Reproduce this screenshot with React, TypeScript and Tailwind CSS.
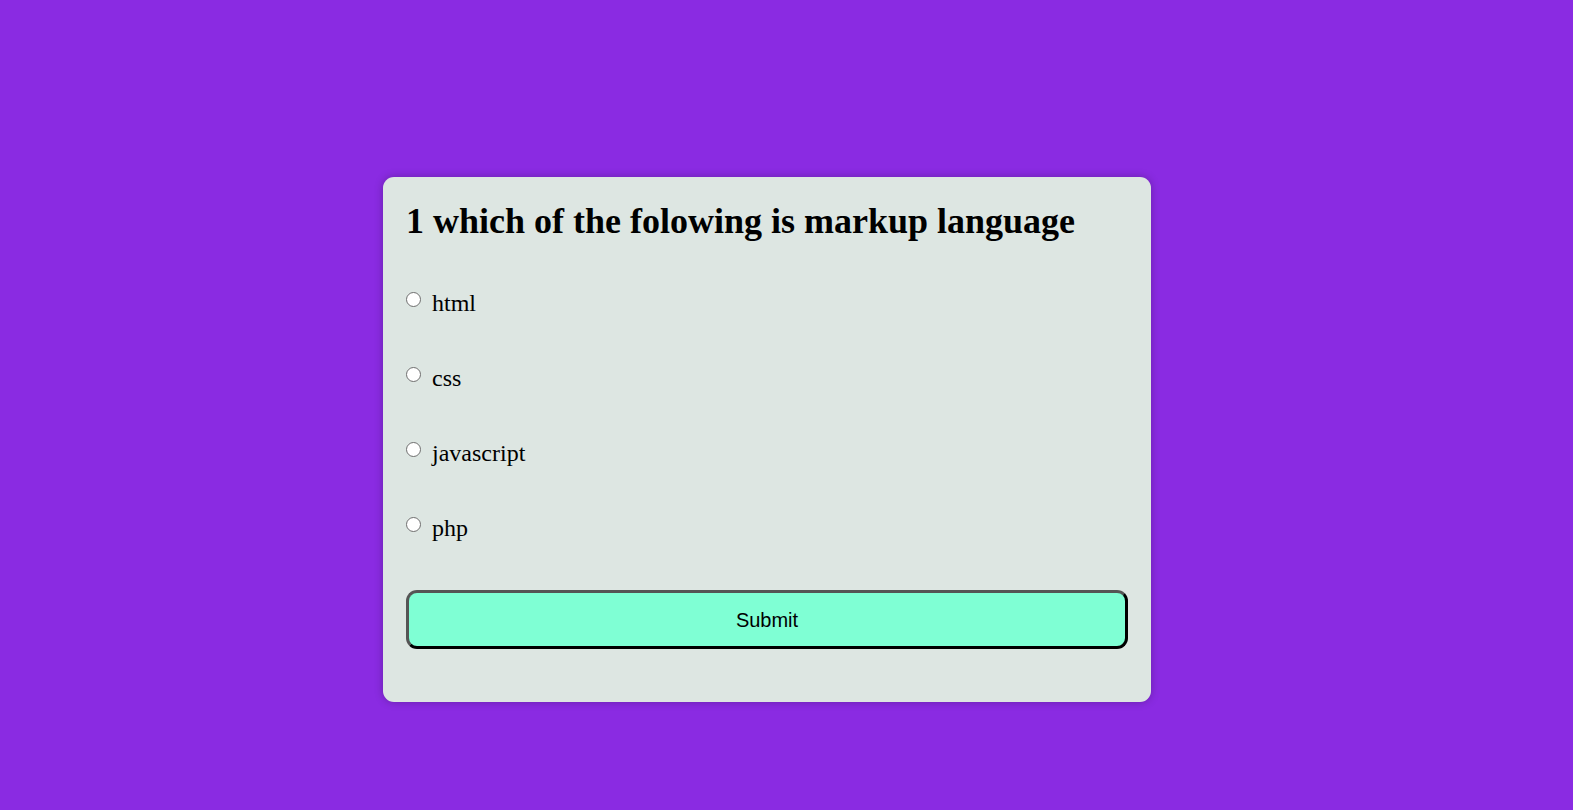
import React from "react";

const options = ["html", "css", "javascript", "php"];

export default function App() {
  return (
    <div className="min-h-screen bg-[#8a2be2] pt-[177px] pl-[383px]">
      <div
        className="w-[768px] rounded-[11px] bg-[#dde6e2] pt-[24px] px-[23px] pb-[53px] shadow-[0_0_8px_rgba(0,0,0,0.25)]"
        style={{ fontFamily: '"Liberation Serif", "Times New Roman", serif' }}
      >
        <h1 className="text-[36px] leading-[40px] font-bold text-black">
          1 which of the folowing is markup language
        </h1>
        <div className="mt-[49px] flex flex-col gap-[48px]">
          {options.map((o) => (
            <label key={o} className="flex h-[27px] items-start text-[24px] leading-[27px] text-black">
              <input
                type="radio"
                name="q"
                className="mt-[2px] block h-[15px] w-[15px] shrink-0 appearance-none rounded-full border-[1.5px] border-[#6e6e6e] bg-white"
              />
              <span className="ml-[11px]">{o}</span>
            </label>
          ))}
        </div>
        <button
          className="mt-[48px] block h-[59px] w-full rounded-[11px] border-[3px] border-t-[#555555] border-l-[#555555] border-b-black border-r-black bg-[#7fffd4] text-[20px] text-black"
          style={{ fontFamily: '"Liberation Sans", Arial, sans-serif' }}
        >
          Submit
        </button>
      </div>
    </div>
  );
}
